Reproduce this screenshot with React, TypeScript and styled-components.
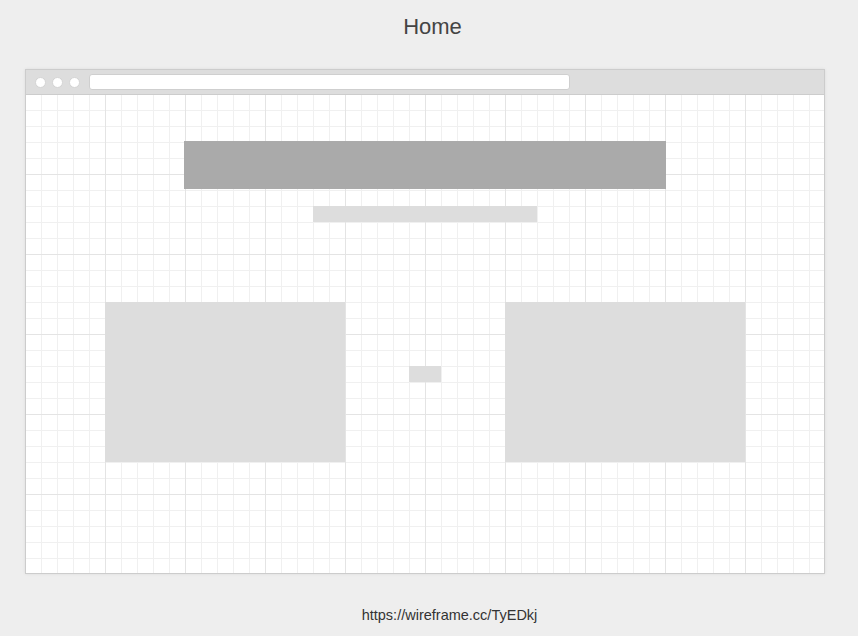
import React from "react";
import styled, { createGlobalStyle } from "styled-components";

const Global = createGlobalStyle`
  html, body { margin: 0; padding: 0; background: #eeeeee; }
  body { font-family: "Liberation Sans", Arial, sans-serif; }
`;

const Page = styled.div`
  width: 858px;
  min-height: 636px;
  display: flex;
  flex-direction: column;
  align-items: flex-start;
`;

const Title = styled.h1`
  align-self: stretch;
  margin: 0;
  padding: 14px 0 0 7px;
  height: 55px;
  line-height: 26px;
  font-size: 22px;
  font-weight: normal;
  color: #444444;
  text-align: center;
`;

const Frame = styled.div`
  margin-left: 25px;
  width: 800px;
  box-sizing: border-box;
  border: 1px solid #cccccc;
  background: #ffffff;
  box-shadow: 0 0 3px rgba(0, 0, 0, 0.08);
  display: flex;
  flex-direction: column;
`;

const Toolbar = styled.div`
  height: 24px;
  background: #dddddd;
  border-bottom: 1px solid #cccccc;
  display: flex;
  align-items: center;
  padding-left: 9px;
  gap: 6px;
`;

const Dot = styled.span`
  width: 11px;
  height: 11px;
  border-radius: 50%;
  background: #ffffff;
  border: 1px solid #d4d4d4;
  box-sizing: border-box;
`;

const UrlField = styled.div`
  margin-left: 3px;
  width: 481px;
  height: 16px;
  box-sizing: border-box;
  background: #ffffff;
  border: 1px solid #cfcfcf;
  border-radius: 3px;
`;

const Canvas = styled.div`
  height: 478px;
  display: flex;
  flex-direction: column;
  align-items: center;
  background-color: #ffffff;
  background-image:
    linear-gradient(to right, transparent 79px, #e4e4e4 79px, #e4e4e4 80px),
    linear-gradient(to bottom, transparent 79px, #e4e4e4 79px, #e4e4e4 80px),
    linear-gradient(to right, transparent 15px, #f0f0f0 15px, #f0f0f0 16px),
    linear-gradient(to bottom, transparent 15px, #f0f0f0 15px, #f0f0f0 16px);
  background-size: 80px 80px, 80px 80px, 16px 16px, 16px 16px;
`;

const Block = styled.div<{ $w: number; $h: number; $dark?: boolean; $mt: number }>`
  width: ${(p) => p.$w}px;
  height: ${(p) => p.$h}px;
  margin-top: ${(p) => p.$mt}px;
  background: ${(p) => (p.$dark ? "#aaaaaa" : "#dddddd")};
  flex-shrink: 0;
`;

const Row = styled.div`
  margin-top: 80px;
  display: flex;
  align-items: flex-start;
  gap: 64px;
`;

const Footer = styled.div`
  align-self: stretch;
  margin-top: 33px;
  padding-left: 41px;
  line-height: 16px;
  font-size: 14.5px;
  color: #333333;
  text-align: center;
`;

export default function App() {
  return (
    <>
      <Global />
      <Page>
        <Title>Home</Title>
        <Frame>
          <Toolbar>
            <Dot />
            <Dot />
            <Dot />
            <UrlField />
          </Toolbar>
          <Canvas>
            <Block $w={482} $h={48} $dark $mt={46} />
            <Block $w={224} $h={16} $mt={17} />
            <Row>
              <Block $w={240} $h={160} $mt={0} />
              <Block $w={32} $h={16} $mt={64} />
              <Block $w={240} $h={160} $mt={0} />
            </Row>
          </Canvas>
        </Frame>
        <Footer>https://wireframe.cc/TyEDkj</Footer>
      </Page>
    </>
  );
}
